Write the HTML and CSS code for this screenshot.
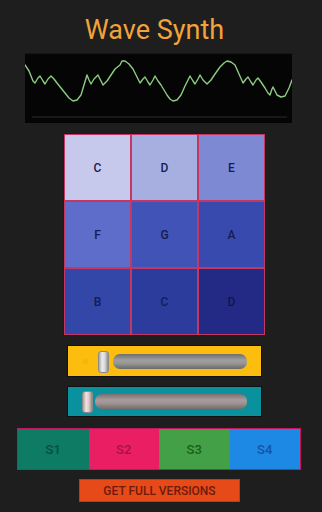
FILE: index.html
```html
<!DOCTYPE html>
<html>
<head>
<meta charset="utf-8">
<link rel="stylesheet" href="styles.css">
</head>
<body>
<div class="app">
  <h1 class="title">Wave Synth</h1>
  <div class="scope">
    <svg width="267" height="70" viewBox="0 0 267 70">
      <line x1="7" y1="64" x2="262" y2="64" stroke="#2a2a2a" stroke-width="1"/>
      <polyline fill="none" stroke="#8ccf80" stroke-width="1.4" stroke-linejoin="round" stroke-linecap="round"
        points="0,12 4,18 8,28 10,30 13,25 15,23 18,28 20,31 23,26 26,23 29,26 32,30 36,35 40,40 44,45 48,48 52,47 56,42 59,32 62,22 64,27 66,31 69,26 73,22 76,28 78,32 82,28 86,22 90,16 95,12 97,8 100,8 104,11 108,16 112,24 115,30 118,26 120,24 123,29 125,32 128,27 130,23 133,28 136,32 139,37 142,42 145,46 148,48 152,47 156,42 160,33 165,23 168,28 170,31 173,26 175,22 178,27 182,31 186,27 190,21 195,14 199,10 202,8 206,9 210,12 214,21 218,30 221,26 223,24 226,29 228,32 231,27 233,25 236,29 240,35 243,40 245,42 247,36 248,34 250,38 252,42 256,44 260,43 264,35 267,27"/>
    </svg>
  </div>
  <div class="pads">
    <div class="pad p1">C</div>
    <div class="pad p2">D</div>
    <div class="pad p3">E</div>
    <div class="pad p4">F</div>
    <div class="pad p5">G</div>
    <div class="pad p6">A</div>
    <div class="pad p7">B</div>
    <div class="pad p8">C</div>
    <div class="pad p9">D</div>
  </div>
  <div class="slider slider-amber">
    <div class="fill"><span class="dot"></span></div>
    <div class="thumb"></div>
    <div class="track"></div>
  </div>
  <div class="slider slider-teal">
    <div class="thumb"></div>
    <div class="track"></div>
  </div>
  <div class="sounds">
    <div class="snd s1">S1</div>
    <div class="snd s2">S2</div>
    <div class="snd s3">S3</div>
    <div class="snd s4">S4</div>
  </div>
  <div class="cta">GET FULL VERSIONS</div>
</div>
</body>
</html>
```
FILE: styles.css
```css
* { box-sizing: border-box; }
html, body { margin: 0; padding: 0; }
body {
  background: #1e1e1e;
  font-family: Roboto, "Liberation Sans", sans-serif;
  width: 322px;
  height: 512px;
  overflow: hidden;
}
.app {
  display: flex;
  flex-direction: column;
  align-items: flex-start;
  padding-top: 14px;
}
.title {
  margin: 0;
  width: 322px;
  padding-right: 13px;
  text-align: center;
  font-size: 27px;
  line-height: 32px;
  font-weight: 400;
  color: #f2a33a;
}
.scope {
  margin: 7px 0 0 25px;
  width: 267px;
  height: 70px;
  background: #050505;
  border-top: 1px solid #151515;
}
.scope svg { display: block; margin-top: -1px; }
.pads {
  margin: 11px 0 0 64px;
  display: grid;
  grid-template-columns: repeat(3, 67px);
  grid-template-rows: repeat(3, 67px);
  outline: 1px solid #2a1418;
}
.pad {
  border: 1px solid #c43763;
  display: flex;
  align-items: center;
  justify-content: center;
  font-size: 12px;
  font-weight: 500;
  color: #151b55;
}
.p1 { background: #c6c9ec; }
.p2 { background: #a7afe0; }
.p3 { background: #7d89d3; }
.p4 { background: #5d6dc9; }
.p5 { background: #4153b6; }
.p6 { background: #394aae; }
.p7 { background: #3347a8; }
.p8 { background: #2c3c9c; }
.p9 { background: #232a86; color: #10154e; }
.slider {
  margin: 10px 0 0 67px;
  width: 195px;
  height: 32px;
  display: flex;
  align-items: center;
  padding: 0 14px;
  border: 1px solid #111;
}
.slider-amber { background: #fdbd0e; gap: 4px; padding-top: 1px; }
.slider-teal { background: #09929e; margin-top: 9px; gap: 2px; height: 31px; }
.fill {
  width: 12px;
  display: flex;
  align-items: center;
}
.dot {
  width: 5px;
  height: 5px;
  border-radius: 50%;
  background: #fab20c;
  margin-left: 1px;
}
.thumb {
  width: 11px;
  height: 22px;
  border-radius: 3px;
  background: linear-gradient(90deg, #a8a8a8 0%, #ececec 35%, #d8d8d8 65%, #8c8c8c 100%);
  border: 1px solid #8a8a8a;
}
.slider-teal .thumb {
  background: linear-gradient(90deg, #b49a9a 0%, #eee4e4 35%, #dccaca 65%, #9a8080 100%);
}
.track {
  flex: 1;
  height: 15px;
  border-radius: 7px;
  background: linear-gradient(180deg, #6e6e6e 0%, #9e9e9e 40%, #999 60%, #6a6a6a 100%);
}
.slider-teal .track {
  background: linear-gradient(180deg, #7a7070 0%, #a89c9c 40%, #a09494 60%, #766c6c 100%);
}
.sounds {
  margin: 11px 0 0 17px;
  width: 284px;
  height: 42px;
  display: flex;
  border: 1px solid #c2185b;
}
.snd {
  flex: 1;
  display: flex;
  align-items: center;
  justify-content: center;
  font-size: 13px;
  font-weight: 500;
}
.s1 { background: #0e7b64; color: #0a4d40; }
.s2 { background: #e91e63; color: #a5124a; }
.s3 { background: #43a047; color: #1b5e20; }
.s4 { background: #1e88e5; color: #1553a8; }
.cta {
  margin: 9px 0 0 79px;
  width: 161px;
  height: 23px;
  background: #e64a19;
  color: #6e1a0c;
  font-size: 12px;
  font-weight: 500;
  display: flex;
  align-items: center;
  justify-content: center;
  border: 1px solid #c23a12;
}
```
